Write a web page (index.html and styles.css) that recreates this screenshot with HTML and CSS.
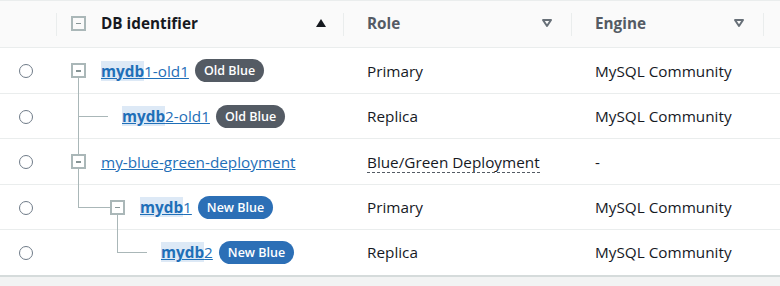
FILE: index.html
```html
<!DOCTYPE html>
<html lang="en">
<head>
  <meta charset="UTF-8">
  <title>Databases</title>
  <link rel="stylesheet" href="styles.css">
</head>
<body>
  <table class="db-table">
    <colgroup>
      <col class="col-select">
      <col class="col-id">
      <col class="col-role">
      <col class="col-engine">
      <col>
    </colgroup>
    <thead>
      <tr>
        <th></th>
        <th class="th-id">
          <div class="th-inner">
            <span class="expander"></span>
            <span class="th-label">DB identifier</span>
            <svg class="sort-icon" width="12" height="10" viewBox="0 0 12 10"><path d="M6 1 L11 9 L1 9 Z" fill="#16191f"/></svg>
          </div>
        </th>
        <th class="th-muted">
          <div class="th-inner">
            <span class="th-label">Role</span>
            <svg class="sort-icon" width="12" height="10" viewBox="0 0 12 10"><path d="M2 2 L10 2 L6 8 Z" fill="none" stroke="#687078" stroke-width="2" stroke-linejoin="round"/></svg>
          </div>
        </th>
        <th class="th-muted">
          <div class="th-inner">
            <span class="th-label">Engine</span>
            <svg class="sort-icon" width="12" height="10" viewBox="0 0 12 10"><path d="M2 2 L10 2 L6 8 Z" fill="none" stroke="#687078" stroke-width="2" stroke-linejoin="round"/></svg>
          </div>
        </th>
        <th></th>
      </tr>
    </thead>
    <tbody>
      <tr>
        <td><span class="radio"></span></td>
        <td class="tree lvl0">
          <span class="ln ln-a-down"></span>
          <div class="tree-inner">
            <span class="expander"></span>
            <a href="#"><mark>mydb</mark>1-old1</a>
            <span class="badge badge-old">Old Blue</span>
          </div>
        </td>
        <td>Primary</td>
        <td>MySQL Community</td>
        <td></td>
      </tr>
      <tr>
        <td><span class="radio"></span></td>
        <td class="tree lvl1-leaf">
          <span class="ln ln-a-full"></span>
          <span class="ln ln-a-h"></span>
          <div class="tree-inner">
            <a href="#"><mark>mydb</mark>2-old1</a>
            <span class="badge badge-old">Old Blue</span>
          </div>
        </td>
        <td>Replica</td>
        <td>MySQL Community</td>
        <td></td>
      </tr>
      <tr>
        <td><span class="radio"></span></td>
        <td class="tree lvl0">
          <span class="ln ln-a-full"></span>
          <div class="tree-inner">
            <span class="expander"></span>
            <a href="#">my-blue-green-deployment</a>
          </div>
        </td>
        <td><span class="dashed">Blue/Green Deployment</span></td>
        <td>-</td>
        <td></td>
      </tr>
      <tr>
        <td><span class="radio"></span></td>
        <td class="tree lvl1">
          <span class="ln ln-a-up"></span>
          <span class="ln ln-a-h-icon"></span>
          <span class="ln ln-b-down"></span>
          <div class="tree-inner">
            <span class="expander"></span>
            <a href="#"><mark>mydb</mark>1</a>
            <span class="badge badge-new">New Blue</span>
          </div>
        </td>
        <td>Primary</td>
        <td>MySQL Community</td>
        <td></td>
      </tr>
      <tr>
        <td><span class="radio"></span></td>
        <td class="tree lvl2-leaf">
          <span class="ln ln-b-up"></span>
          <span class="ln ln-b-h"></span>
          <div class="tree-inner">
            <a href="#"><mark>mydb</mark>2</a>
            <span class="badge badge-new">New Blue</span>
          </div>
        </td>
        <td>Replica</td>
        <td>MySQL Community</td>
        <td></td>
      </tr>
    </tbody>
  </table>
  <div class="below"></div>
</body>
</html>
```

FILE: styles.css
```css
body {
  margin: 0;
  font-family: "Open Sans", Arial, sans-serif;
  font-size: 15.3px;
  color: #16191f;
  background-color: #fff;
}

.db-table {
  width: 100%;
  border-collapse: collapse;
  table-layout: fixed;
}

.col-select { width: 56px; }
.col-id { width: 287px; }
.col-role { width: 228px; }
.col-engine { width: 192px; }

thead tr {
  height: 47px;
  background-color: #fafafa;
  border-top: 1px solid #eaeded;
  border-bottom: 1px solid #eaeded;
}

th {
  position: relative;
  text-align: left;
  padding: 0 18px 0 24px;
  font-weight: 700;
  white-space: nowrap;
}

  th + th::before {
    content: "";
    position: absolute;
    left: 0;
    top: 12px;
    bottom: 11px;
    width: 1px;
    background-color: #eaeded;
  }

th.th-id {
  padding-left: 15px;
  padding-right: 16px;
}

.th-inner {
  display: flex;
  align-items: center;
  padding-bottom: 2px;
}

.th-muted {
  color: #545b64;
}

.sort-icon {
  margin-left: auto;
}

tbody tr {
  height: 45px;
  border-bottom: 1px solid #eaeded;
}

  tbody tr:nth-child(odd) {
    height: 46px;
  }

  tbody tr:last-child {
    border-bottom: 2px solid #d5dbdb;
  }

td {
  padding: 0 0 0 24px;
  white-space: nowrap;
  vertical-align: middle;
}

td:first-child {
  padding-left: 19px;
}

.radio {
  display: inline-block;
  width: 12px;
  height: 12px;
  border: 1.5px solid #6f7b88;
  border-radius: 50%;
  vertical-align: middle;
  margin-top: -2px;
}

.expander {
  position: relative;
  z-index: 1;
  flex: none;
  box-sizing: border-box;
  width: 15px;
  height: 15px;
  border: 2px solid #aab7b8;
  background-color: #fff;
  margin-right: 15px;
}

  .expander::after {
    content: "";
    position: absolute;
    left: 3px;
    right: 3px;
    top: 5px;
    height: 1.5px;
    background-color: #879596;
  }

th .expander {
  background-color: #fafafa;
}

/* tree cells */
.tree {
  position: relative;
}

.tree-inner {
  display: flex;
  align-items: center;
}

.lvl0 { padding-left: 15px; }
.lvl1 { padding-left: 54px; }
.lvl1-leaf { padding-left: 66px; }
.lvl2-leaf { padding-left: 105px; }

.ln {
  position: absolute;
  background-color: #aab7b8;
}

.ln-a-down { left: 22px; width: 1px; top: 50%; bottom: -1px; }
.ln-a-full { left: 22px; width: 1px; top: 0; bottom: -1px; }
.ln-a-up { left: 22px; width: 1px; top: 0; height: 50%; }
.ln-a-h { left: 22px; width: 30px; top: 50%; height: 1px; }
.ln-a-h-icon { left: 22px; width: 33px; top: 50%; height: 1px; }
.ln-b-down { left: 61px; width: 1px; top: 50%; bottom: -1px; }
.ln-b-up { left: 61px; width: 1px; top: 0; height: 50%; }
.ln-b-h { left: 61px; width: 30px; top: 50%; height: 1px; }

a {
  color: #1f6fb8;
  text-decoration: underline;
}

mark {
  background-color: #dde9f6;
  color: inherit;
  font-weight: 700;
}

.badge {
  margin-left: 6px;
  padding: 0 9px;
  height: 23px;
  line-height: 23px;
  border-radius: 12px;
  color: #fff;
  font-size: 12.5px;
  font-weight: 600;
}

.badge-old {
  background-color: #545b64;
}

.badge-new {
  background-color: #2c6fb6;
}

.dashed {
  border-bottom: 1px dashed #545b64;
}

.below {
  height: 20px;
  background-color: #f2f3f3;
}
```
